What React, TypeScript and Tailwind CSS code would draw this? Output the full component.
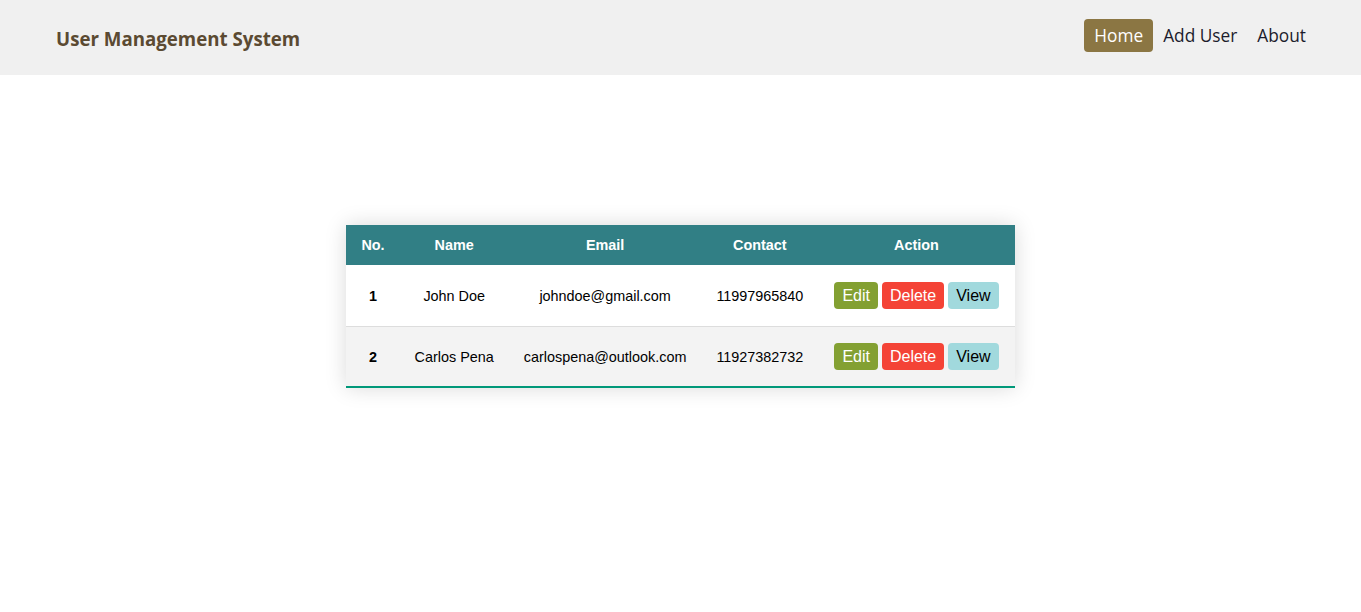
const users = [
  { id: 1, name: 'John Doe', email: 'johndoe@gmail.com', contact: '11997965840' },
  { id: 2, name: 'Carlos Pena', email: 'carlospena@outlook.com', contact: '11927382732' },
];

export default function App() {
  return (
    <div className="min-h-[612px] bg-white">
      <header className="flex h-[75px] items-center justify-between bg-[#f0f0f0] pl-[56px] pr-[45px] font-['Open_Sans',sans-serif]">
        <h1 className="mt-[3px] text-[18.7px] font-bold text-[#5b4a32]">User Management System</h1>
        <nav className="-mt-[4px] flex items-center text-[17.3px] text-[#1c1c2c]">
          <a className="rounded-[4px] bg-[#8b7643] px-[10px] py-[4px] text-white">Home</a>
          <a className="px-[10px] py-[4px]">Add User</a>
          <a className="px-[10px] py-[4px]">About</a>
        </nav>
      </header>
      <main className="flex justify-center pt-[150px]">
        <table className="border-collapse font-['Liberation_Sans',Arial,sans-serif] text-[14.4px] shadow-[0_0_20px_rgba(0,0,0,0.15)]">
          <thead>
            <tr className="h-[40px] bg-[#317f85] text-center font-bold text-white">
              <th className="px-[15px] pt-[2px]">No.</th>
              <th className="px-[15px] pt-[2px]">Name</th>
              <th className="px-[15px] pt-[2px]">Email</th>
              <th className="px-[15px] pt-[2px]">Contact</th>
              <th className="px-[16px] pt-[2px]">Action</th>
            </tr>
          </thead>
          <tbody>
            {users.map((u, i) => (
              <tr
                key={u.id}
                className={`h-[61px] text-center text-black ${
                  i % 2 === 1 ? 'border-b-2 border-[#009879] bg-[#f3f3f3]' : 'border-b border-[#dddddd] bg-white'
                }`}
              >
                <td className="px-[15px] pt-[4px] font-bold">{u.id}</td>
                <td className="px-[15px] pt-[4px]">{u.name}</td>
                <td className="px-[15px] pt-[4px]">{u.email}</td>
                <td className="px-[15px] pt-[4px]">{u.contact}</td>
                <td className="px-[16px]">
                  <div className="flex justify-center gap-[4px] text-[16px] leading-[21px]">
                    <button className="rounded-[4px] bg-[#83a032] px-[8px] py-[3px] text-white">Edit</button>
                    <button className="rounded-[4px] bg-[#f44336] px-[8px] py-[3px] text-white">Delete</button>
                    <button className="rounded-[4px] bg-[#a1d9dd] px-[8px] py-[3px] text-black">View</button>
                  </div>
                </td>
              </tr>
            ))}
          </tbody>
        </table>
      </main>
    </div>
  );
}
